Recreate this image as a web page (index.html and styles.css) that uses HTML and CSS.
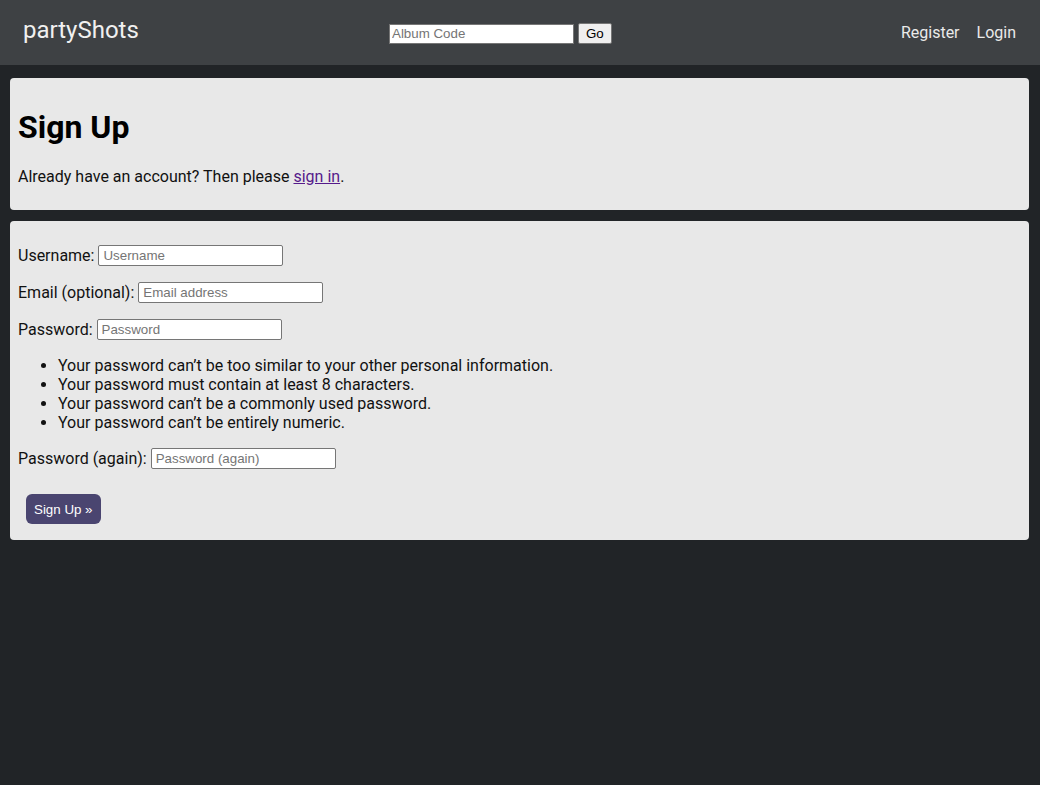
FILE: index.html
```html
<!DOCTYPE html>
<html lang="en">
<head>
<meta charset="utf-8">
<title>Sign Up - partyShots</title>
<link rel="stylesheet" href="styles.css">
</head>
<body>
<header class="topbar">
  <a class="brand" href="#">partyShots</a>
  <form class="album-form">
    <input class="album-input" type="text" placeholder="Album Code">
    <button class="go-btn" type="button">Go</button>
  </form>
  <nav class="nav">
    <a href="#">Register</a>
    <a href="#">Login</a>
  </nav>
</header>
<main class="content">
  <section class="card intro">
    <h1>Sign Up</h1>
    <p>Already have an account? Then please <a class="link" href="#">sign in</a>.</p>
  </section>
  <section class="card">
    <form class="signup">
      <p><label>Username:</label> <input class="field" type="text" placeholder="Username"></p>
      <p><label>Email (optional):</label> <input class="field" type="email" placeholder="Email address"></p>
      <p><label>Password:</label> <input class="field" type="password" placeholder="Password"></p>
      <ul class="help">
        <li>Your password can’t be too similar to your other personal information.</li>
        <li>Your password must contain at least 8 characters.</li>
        <li>Your password can’t be a commonly used password.</li>
        <li>Your password can’t be entirely numeric.</li>
      </ul>
      <p><label>Password (again):</label> <input class="field" type="password" placeholder="Password (again)"></p>
      <button class="primary" type="button">Sign Up »</button>
    </form>
  </section>
</main>
</body>
</html>
```

FILE: styles.css
```css
html, body {
  margin: 0;
  padding: 0;
}
body {
  background: #212427;
  font-family: Roboto, "Liberation Sans", sans-serif;
  font-size: 16px;
  color: #111;
}
.topbar {
  height: 65px;
  background: #3e4144;
  display: flex;
  align-items: center;
  padding: 0 24px 0 23px;
  box-sizing: border-box;
}
.brand {
  color: #f0f0f0;
  text-decoration: none;
  font-size: 24px;
  margin-top: -6px;
  width: 300px;
  flex: none;
}
.album-form {
  display: flex;
  align-items: center;
  gap: 4px;
  margin-left: 66px;
  margin-top: 2px;
}
.album-input {
  width: 185px;
  height: 20px;
  box-sizing: border-box;
  border: 1px solid #767676;
  font-family: "Liberation Sans", sans-serif;
  font-size: 13.33px;
  padding: 1px 2px;
}
.go-btn {
  font-family: "Liberation Sans", sans-serif;
  font-size: 13.33px;
  height: 21px;
  padding: 1px 7px;
  background: #efefef;
  border: 1px solid #767676;
  border-radius: 2px;
  color: #000;
}
.nav {
  margin-left: auto;
  display: flex;
  justify-content: flex-end;
  gap: 17px;
}
.nav a {
  color: #eaeaea;
  text-decoration: none;
  font-size: 16px;
}
.content {
  padding: 13px 11px 10px 10px;
  display: flex;
  flex-direction: column;
  gap: 11px;
}
.card {
  background: #e8e8e8;
  border-radius: 4px;
  padding: 1px 8px;
}
.intro h1 {
  font-size: 32px;
  font-weight: 700;
  margin: 29px 0 0;
  color: #000;
}
.intro p {
  margin: 21px 0 23px;
}
.link {
  color: #551a8b;
}
.signup p {
  margin: 16px 0;
  display: flex;
  align-items: center;
  gap: 4px;
}
.signup p:first-child {
  margin-top: 23px;
}
.signup label {
  color: #111;
}
.field {
  width: 185px;
  height: 21px;
  box-sizing: border-box;
  border: 1px solid #767676;
  border-radius: 2px;
  font-family: "Liberation Sans", sans-serif;
  font-size: 13.33px;
  padding: 1px 4px;
  background: #fff;
}
.help {
  margin: 16px 0;
  padding-left: 40px;
}
.primary {
  margin: 9px 8px 15px;
  background: #4a4570;
  color: #fff;
  border: none;
  border-radius: 6px;
  font-family: "Liberation Sans", sans-serif;
  font-size: 13.33px;
  padding: 8px 8px;
  height: 30px;
}
```
